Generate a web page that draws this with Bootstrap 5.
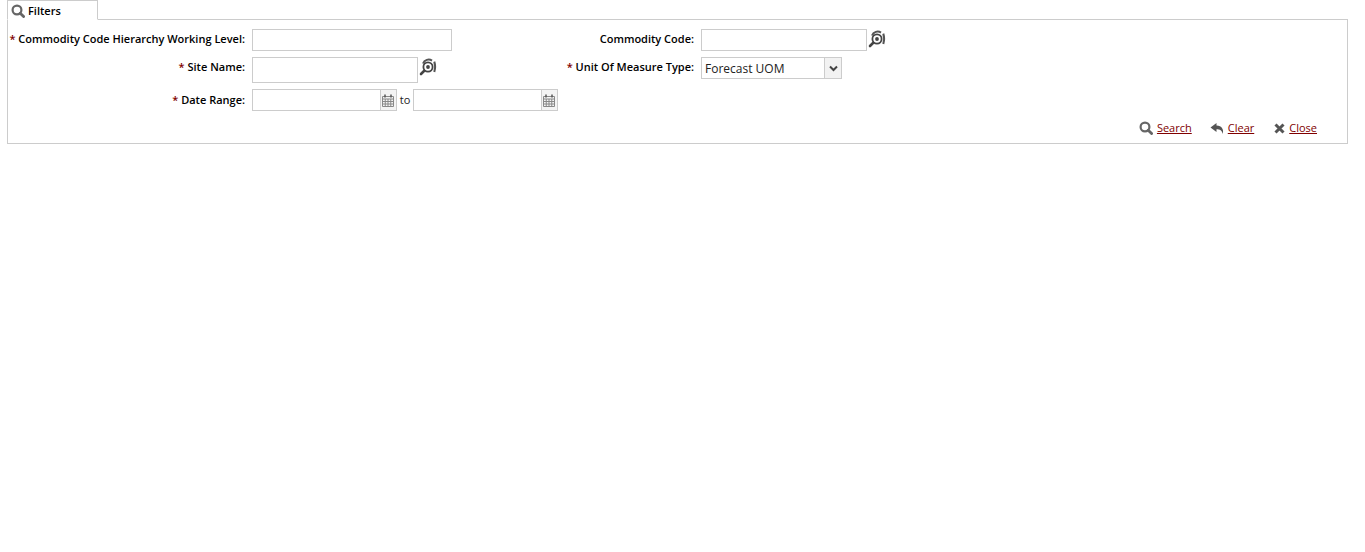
<!DOCTYPE html>
<html lang="en">
<head>
<meta charset="utf-8">
<title>Filters</title>
<link href="https://cdn.jsdelivr.net/npm/bootstrap@5.3.0/dist/css/bootstrap.min.css" rel="stylesheet">
<style>
body{font-family:"Open Sans",sans-serif;font-size:11px;color:#000;background:#fff;padding:0 17px 0 7px;}
.tab-strip{height:20px;margin-bottom:-1px;position:relative;z-index:1;}
.filter-tab{width:91px;height:20px;border:1px solid #ccc;border-bottom-color:#fff;background:#fff;font-weight:600;font-size:11px;padding:1px 0 0 3px;gap:3px;line-height:20px;color:#000;}
.filter-panel{border:1px solid #ccc;height:125px;padding-top:9px;}
.filter-grid{display:grid;grid-template-columns:237px 306px 129px 1fr;column-gap:7px;row-gap:6px;align-items:start;}
.field-label{font-weight:600;text-align:right;line-height:15px;padding-top:2px;white-space:nowrap;}
.field-label-low{padding-top:3px;}
.req{color:#800000;}
.txt{display:block;border:1px solid #ccc;background:#fff;padding:0 3px;outline:0;border-radius:0;}
.w200{width:200px;height:22px}.w166{width:166px;height:22px}.w166t{width:166px;height:26px}
.date-in{width:128px;height:22px;border-right:0}
.cal-btn{width:17px;height:22px;background:#f4f4f4;border:1px solid #ccc;padding-right:1px;}
.to-word{width:16px;text-align:center;font-size:11px;color:#222;}
.sel-box{width:141px;height:22px;border:1px solid #ccc;font-size:12px;color:#222;padding-left:3px;line-height:22px;}
.sel-arrow{width:17px;height:20px;background:#f2f2f2;border-left:1px solid #ccc;}
.act-row{padding-right:30px;margin-top:9px;}
.act-link{color:#800000;text-decoration:underline;font-size:11px;font-weight:400;}
.act-search{gap:4px;margin-right:18px;}
.act-clear{gap:3px;margin-right:20px;}
.act-close{gap:4px;}
.lookup-ic{margin-left:1px;margin-top:1px;}
</style>
</head>
<body>
<div class="tab-strip"><div class="filter-tab d-flex align-items-center">
<svg width="14" height="14" viewBox="0 0 14 14"><circle cx="6" cy="6" r="4.4" fill="none" stroke="#666" stroke-width="2.2"/><path d="M9.200 9.200l3.400 3.400" stroke="#666" stroke-width="2.800" stroke-linecap="round"/></svg><span>Filters</span></div></div>
<div class="filter-panel">
<div class="filter-grid">
  <div class="field-label"><span class="req">*</span> Commodity Code Hierarchy Working Level:</div>
  <div><input class="txt w200" type="text"></div>
  <div class="field-label">Commodity Code:</div>
  <div class="d-flex"><input class="txt w166" type="text">
    <svg class="lookup-ic" width="18" height="18" viewBox="0 0 18 18"><path d="M4 5.500A6 6 0 0 1 13 2.600" fill="none" stroke="#555" stroke-width="2"/><path d="M15.300 3.600c1 3 1 7 0 10.400" fill="none" stroke="#555" stroke-width="2"/><circle cx="9" cy="9" r="4.600" fill="none" stroke="#444" stroke-width="1.800"/><circle cx="9" cy="9" r="1.900" fill="#444"/><path d="M5 13l-3 3" stroke="#444" stroke-width="2.600" stroke-linecap="round"/></svg></div>

  <div class="field-label"><span class="req">*</span> Site Name:</div>
  <div class="d-flex"><input class="txt w166t" type="text">
    <svg class="lookup-ic" width="18" height="18" viewBox="0 0 18 18"><path d="M4 5.500A6 6 0 0 1 13 2.600" fill="none" stroke="#555" stroke-width="2"/><path d="M15.300 3.600c1 3 1 7 0 10.400" fill="none" stroke="#555" stroke-width="2"/><circle cx="9" cy="9" r="4.600" fill="none" stroke="#444" stroke-width="1.800"/><circle cx="9" cy="9" r="1.900" fill="#444"/><path d="M5 13l-3 3" stroke="#444" stroke-width="2.600" stroke-linecap="round"/></svg></div>
  <div class="field-label"><span class="req">*</span> Unit Of Measure Type:</div>
  <div><div class="sel-box d-flex justify-content-between"><span>Forecast UOM</span><span class="sel-arrow d-flex align-items-center justify-content-center"><svg width="9" height="7" viewBox="0 0 9 7"><path d="M1 1.500l3.500 3.500L8 1.500" fill="none" stroke="#444" stroke-width="2"/></svg></span></div></div>

  <div class="field-label field-label-low"><span class="req">*</span> Date Range:</div>
  <div class="d-flex align-items-center">
    <input class="txt date-in" type="text"><span class="cal-btn d-flex align-items-center justify-content-center"><svg width="12" height="13" viewBox="0 0 12 13"><path d="M.5 2.500h11v10H.5zM.5 5h11M.5 7.500h11M.5 10h11M3.250 5v7.500M6 5v7.500M8.750 5v7.500" fill="#f4f4f4" stroke="#888"/><path d="M3 .5v3M9 .5v3" stroke="#555" stroke-width="1.500"/></svg></span>
    <span class="to-word">to</span>
    <input class="txt date-in" type="text"><span class="cal-btn d-flex align-items-center justify-content-center"><svg width="12" height="13" viewBox="0 0 12 13"><path d="M.5 2.500h11v10H.5zM.5 5h11M.5 7.500h11M.5 10h11M3.250 5v7.500M6 5v7.500M8.750 5v7.500" fill="#f4f4f4" stroke="#888"/><path d="M3 .5v3M9 .5v3" stroke="#555" stroke-width="1.500"/></svg></span>
  </div>
  <div></div><div></div>
</div>
<div class="act-row d-flex justify-content-end align-items-center">
  <div class="act-search d-flex align-items-center"><svg width="14" height="14" viewBox="0 0 14 14"><circle cx="6" cy="6" r="4.400" fill="none" stroke="#666" stroke-width="2.200"/><path d="M9.200 9.200l3.400 3.400" stroke="#666" stroke-width="2.800" stroke-linecap="round"/></svg><a class="act-link" href="#">Search</a></div>
  <div class="act-clear d-flex align-items-center"><svg width="15" height="13" viewBox="0 0 15 13"><path d="M6.500 1L.5 5.500 6.500 10V7.200c3.500 0 5.500 1.300 6.300 4.800 1.200-4.500-.8-8.300-6.300-8.500z" fill="#555"/></svg><a class="act-link" href="#">Clear</a></div>
  <div class="act-close d-flex align-items-center"><svg width="11" height="11" viewBox="0 0 11 11"><path d="M1.500 1.500l8 8M9.500 1.500l-8 8" stroke="#555" stroke-width="3"/></svg><a class="act-link" href="#">Close</a></div>
</div>
</div>
</body>
</html>
